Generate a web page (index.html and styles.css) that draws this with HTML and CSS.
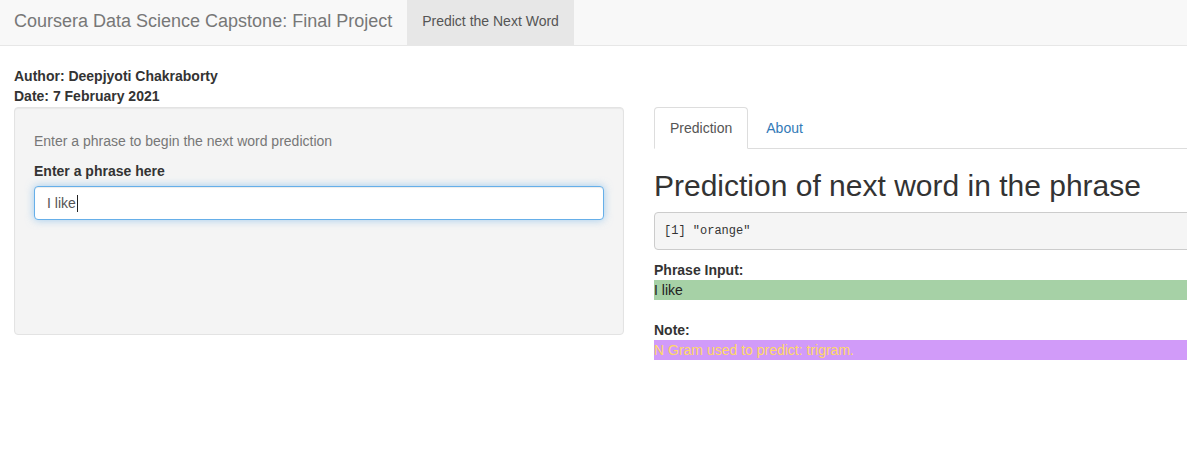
FILE: index.html
```html
<!DOCTYPE html>
<html>
<head>
<meta charset="utf-8">
<title>Coursera Data Science Capstone: Final Project</title>
<link rel="stylesheet" href="styles.css">
</head>
<body>
<nav class="navbar">
  <span class="brand">Coursera Data Science Capstone: Final Project</span>
  <ul class="nav-links">
    <li class="nav-item active">Predict the Next Word</li>
  </ul>
</nav>
<div class="container">
  <div class="meta">
    <div class="meta-line">Author: Deepjyoti Chakraborty</div>
    <div class="meta-line">Date: 7 February 2021</div>
  </div>
  <div class="row">
    <div class="col-side">
      <div class="well">
        <p class="help">Enter a phrase to begin the next word prediction</p>
        <div class="form-group">
          <label class="label" for="phrase">Enter a phrase here</label>
          <div class="input">I like<span class="caret"></span></div>
        </div>
      </div>
    </div>
    <div class="col-main">
      <ul class="tabs">
        <li class="tab active">Prediction</li>
        <li class="tab">About</li>
      </ul>
      <h2 class="title">Prediction of next word in the phrase</h2>
      <pre class="output">[1] "orange"</pre>
      <div class="field-label">Phrase Input:</div>
      <div class="bar bar-green">I like</div>
      <div class="field-label note">Note:</div>
      <div class="bar bar-purple">N Gram used to predict: trigram.</div>
    </div>
  </div>
</div>
</body>
</html>
```
FILE: styles.css
```css
html, body {
  margin: 0;
  padding: 0;
  overflow: hidden;
  background: #fff;
}
body {
  font-family: "Liberation Sans", Arial, Helvetica, sans-serif;
  font-size: 14px;
  line-height: 20px;
  color: #333;
}
.navbar {
  display: flex;
  align-items: stretch;
  height: 45px;
  background: #f8f8f8;
  border-bottom: 1px solid #e7e7e7;
  margin-bottom: 20px;
}
.brand {
  display: flex;
  align-items: center;
  padding: 0 15px 3px 14px;
  font-size: 18px;
  color: #777;
}
.nav-links {
  display: flex;
  list-style: none;
  margin: 0;
  padding: 0;
}
.nav-item {
  display: flex;
  align-items: center;
  padding: 0 15px 4px;
  color: #777;
}
.nav-item.active {
  background: #e7e7e7;
  color: #555;
}
.container {
  padding: 0 15px 0 14px;
}
.meta {
  margin-bottom: 1px;
}
.meta-line {
  font-weight: bold;
  line-height: 20px;
}
.row {
  display: flex;
  margin: 0 -15px 0 -14px;
  width: 1917px;
}
.col-side {
  width: 639px;
  padding: 0 15px 0 14px;
  box-sizing: border-box;
  flex: none;
}
.col-main {
  width: 1278px;
  padding: 0 15px;
  box-sizing: border-box;
  flex: none;
}
.well {
  min-height: 228px;
  box-sizing: border-box;
  padding: 19px;
  background: #f4f4f4;
  border: 1px solid #e3e3e3;
  border-radius: 4px;
  box-shadow: inset 0 1px 1px rgba(0,0,0,0.05);
}
.help {
  margin: 4px 0 10px;
  color: #777;
}
.form-group {
  margin-bottom: 15px;
}
.label {
  display: block;
  font-weight: bold;
  margin-bottom: 5px;
}
.input {
  height: 34px;
  box-sizing: border-box;
  padding: 6px 12px;
  background: #fff;
  border: 1px solid #66afe9;
  border-radius: 4px;
  box-shadow: inset 0 1px 1px rgba(0,0,0,.075), 0 0 8px rgba(102,175,233,.6);
  color: #555;
  display: flex;
  align-items: center;
}
.caret {
  display: inline-block;
  width: 1px;
  height: 17px;
  background: #222;
  margin-left: 1px;
}
.tabs {
  display: flex;
  list-style: none;
  margin: 0;
  padding: 0;
  border-bottom: 1px solid #ddd;
}
.tab {
  padding: 10px 15px;
  margin-right: 2px;
  margin-bottom: -1px;
  border: 1px solid transparent;
  border-radius: 4px 4px 0 0;
  color: #337ab7;
}
.tab.active {
  color: #555;
  background: #fff;
  border-color: #ddd #ddd transparent;
}
.title {
  font-size: 30px;
  font-weight: 500;
  line-height: 33px;
  margin: 20px 0 10px;
  color: #333;
}
.output {
  margin: 0 0 10px;
  padding: 9px;
  font-family: "Liberation Mono", "DejaVu Sans Mono", monospace;
  font-size: 12px;
  line-height: 18px;
  color: #333;
  background: #f5f5f5;
  border: 1px solid #ccc;
  border-radius: 4px;
}
.field-label {
  font-weight: bold;
}
.field-label.note {
  margin-top: 20px;
}
.bar {
  line-height: 20px;
}
.bar-green {
  background: #a6d1a6;
  color: #222;
}
.bar-purple {
  background: #d19bf9;
  color: #ffd966;
}
```
